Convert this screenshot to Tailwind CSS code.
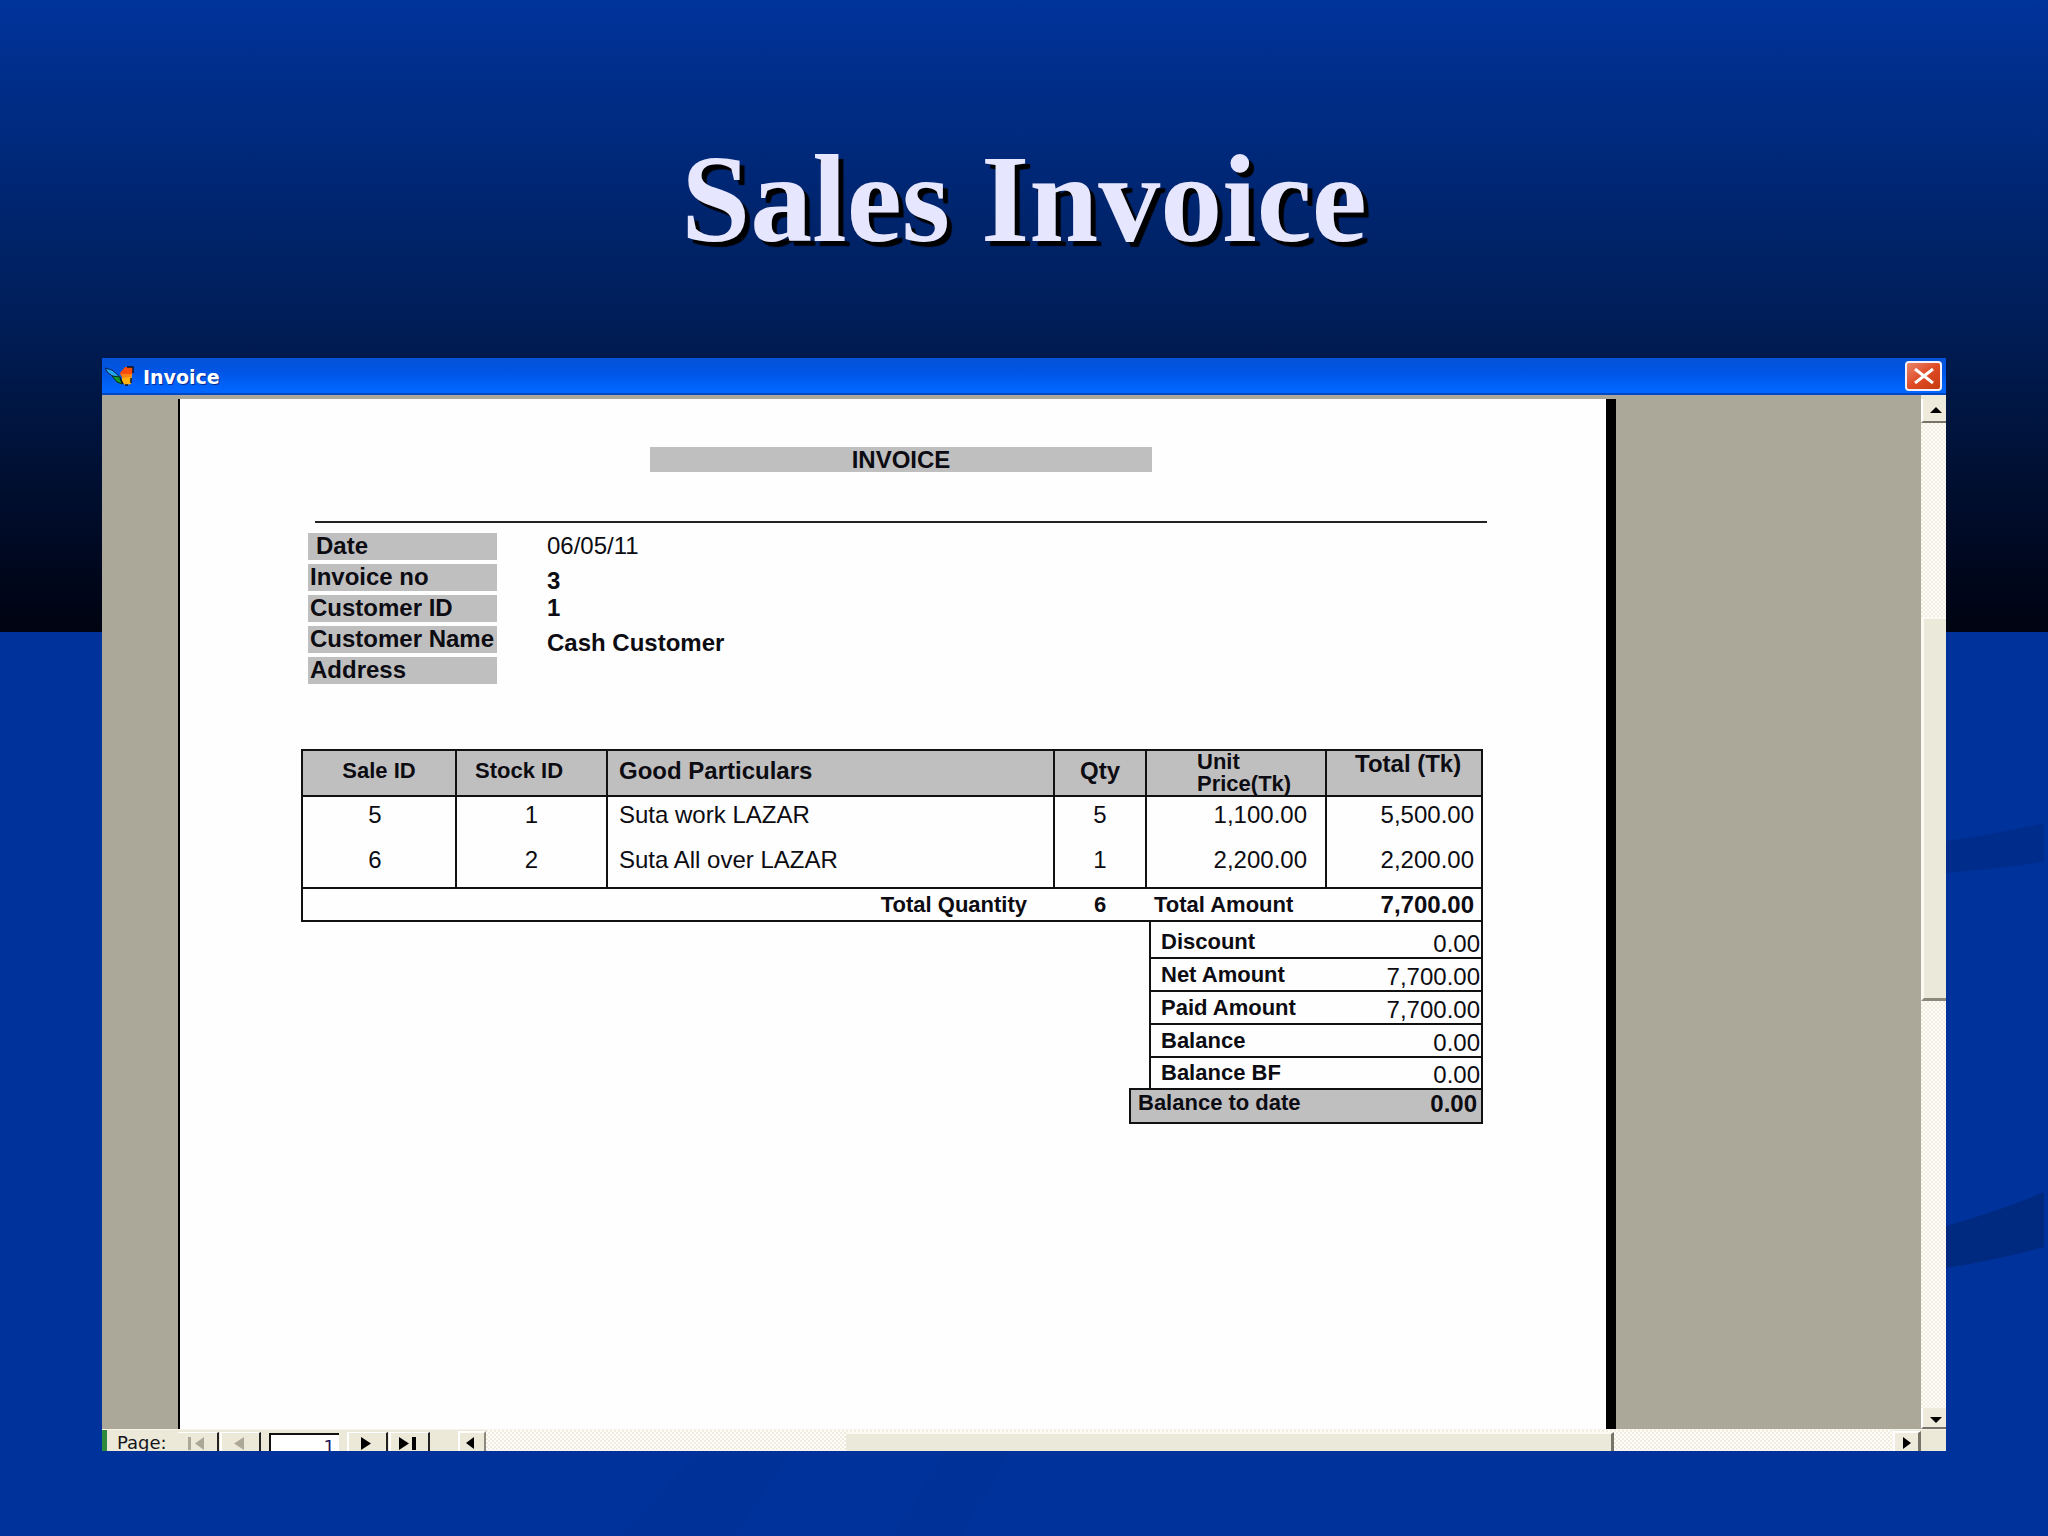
<!DOCTYPE html>
<html lang="en">
<head>
<meta charset="utf-8">
<title>Sales Invoice</title>
<meta name="viewport" content="width=device-width, initial-scale=1">
<script src="https://cdn.jsdelivr.net/npm/@tailwindcss/browser@4"></script>
</head>
<body class="bg-[#00329b]">
<div class="relative min-h-screen flex flex-col overflow-hidden">

  <!-- slide background -->
  <div class="absolute inset-x-0 top-0 h-[632px] bg-linear-to-b from-[#00339b] via-[#001e59] via-50% to-[#000411]"></div>
  <svg class="absolute right-0 top-0" width="1448" height="1536" viewBox="600 0 1448 1536" aria-hidden="true">
    <path d="M1946 841 Q1996 834 2044 823 V862 Q1996 869 1946 873 Z" fill="#002d8c"/>
    <path d="M1946 1226 Q2000 1211 2044 1192 V1247 Q1996 1260 1946 1268 Z" fill="#002a80"/>
    <path d="M622 1536 L700 1451 H790 L735 1536 Z" fill="#003198"/>
    <path d="M895 1536 L945 1451 H1010 L960 1536 Z" fill="#003198"/>
  </svg>

  <h1 class="relative pt-[138px] text-center font-['Liberation_Serif',serif] font-bold text-[124px] leading-none text-[#e6e6ff] [text-shadow:5px_5px_1px_#000]">Sales Invoice</h1>

  <!-- invoice window -->
  <section class="relative flex-1 flex flex-col mt-24 mx-[102px] mb-[85px] overflow-hidden bg-[#aca899]">
    <header class="flex items-center h-[37px] pl-[3px] pr-1 bg-linear-to-b from-[#0453d8] from-0% via-[#0055e5] via-40% to-[#0066ff] to-90% border-b-2 border-[#0148c4]">
      <svg class="w-[30px] h-5" viewBox="0 0 30 20" aria-hidden="true">
        <path d="M0 2 L7 4 L13 9 L15 13 L9 11 L3 7 Z" fill="#25a5ee" stroke="#06234f"/>
        <path d="M7 10 L15 11 L17 18 L12 16 Z" fill="#139a2b" stroke="#06330f"/>
        <path d="M15 7 L20 1 L28 1 L27 9 L16 10 Z" fill="#ff4c0a"/>
        <path d="M17 9 L27 8 L26 18 L20 19 L17 16 Z" fill="#ffb011"/>
        <path d="M16 8 L27 8 L26 11 L17 12 Z" fill="#ff8110"/>
        <path d="M22 1 H28 V7 M26 12 V17 M15 12 L18 18 M20 19 H23" fill="none" stroke="#10151c" stroke-width="1.5"/>
      </svg>
      <h2 class="ml-2 pt-0.5 font-['DejaVu_Sans',sans-serif] font-bold text-[19px] leading-6 text-white [text-shadow:1px_1px_0_#0a2a8c]">Invoice</h2>
      <button type="button" aria-label="Close" class="ml-auto flex items-center justify-center w-[37px] h-[30px] rounded-[4px] border-2 border-[#f4f1fb] bg-linear-to-br from-[#e88468] via-[#df4a24] to-[#c63b12]">
        <svg class="w-5 h-4" viewBox="0 0 20 16" aria-hidden="true"><path d="M1 1 L19 15 M19 1 L1 15" stroke="#fff" stroke-width="3"/></svg>
      </button>
    </header>

    <div class="flex-1 flex">
      <div class="w-[76px] shrink-0"></div>
      <main class="flex-1 mt-1 border-l-2 border-r-10 border-black bg-[#fefefe] pl-[121px] pr-[123px] pt-12 font-['Liberation_Sans',sans-serif] text-2xl leading-6 text-[#0c0c12]">
        <h3 class="ml-[349px] w-[502px] h-[25px] bg-[#c0bfc0] text-center font-bold leading-[26px]">INVOICE</h3>
        <hr class="ml-3.5 -mr-1 mt-[49px] border-t-2 border-[#222]">

        <dl class="ml-[7px] mt-[10px] grid grid-cols-[189px_1fr] auto-rows-[27px] gap-x-[50px] gap-y-1 leading-[26px]">
          <dt class="bg-[#c0bfc0] pl-2 font-bold">Date</dt>
          <dd>06/05/11</dd>
          <dt class="bg-[#c0bfc0] pl-0.5 font-bold">Invoice no</dt>
          <dd class="pt-1 font-bold">3</dd>
          <dt class="bg-[#c0bfc0] pl-0.5 font-bold">Customer ID</dt>
          <dd class="font-bold">1</dd>
          <dt class="bg-[#c0bfc0] pl-0.5 font-bold whitespace-nowrap">Customer Name</dt>
          <dd class="pt-1 font-bold">Cash Customer</dd>
          <dt class="bg-[#c0bfc0] pl-0.5 font-bold">Address</dt>
          <dd></dd>
        </dl>

        <table class="w-full mt-[65px] table-fixed border-collapse border-2 border-[#111]">
          <colgroup>
            <col class="w-[154px]">
            <col class="w-[151px]">
            <col>
            <col class="w-[92px]">
            <col class="w-[180px]">
            <col class="w-[156px]">
          </colgroup>
          <thead>
            <tr class="h-[46px] bg-[#c0bfc0] text-left">
              <th class="border-2 border-[#111] pb-1 text-center text-[22px]">Sale ID</th>
              <th class="border-2 border-[#111] pb-1 pl-[18px] text-[22px]">Stock ID</th>
              <th class="border-2 border-[#111] pb-1 pl-[11px]">Good Particulars</th>
              <th class="border-2 border-[#111] pb-1 text-center">Qty</th>
              <th class="border-2 border-[#111] pl-[50px] text-[22px] leading-[22px]">Unit<br>Price(Tk)</th>
              <th class="border-2 border-[#111] pl-7 align-top leading-[26px]">Total (Tk)</th>
            </tr>
          </thead>
          <tbody>
            <tr class="h-[46px] align-top leading-9">
              <td class="border-x-2 border-[#111] pr-2 text-center">5</td>
              <td class="border-x-2 border-[#111] text-center">1</td>
              <td class="border-x-2 border-[#111] pl-[11px]">Suta work LAZAR</td>
              <td class="border-x-2 border-[#111] text-center">5</td>
              <td class="border-x-2 border-[#111] pr-[18px] text-right">1,100.00</td>
              <td class="border-x-2 border-[#111] pr-[7px] text-right">5,500.00</td>
            </tr>
            <tr class="h-[46px] align-top leading-9">
              <td class="border-x-2 border-[#111] pr-2 text-center">6</td>
              <td class="border-x-2 border-[#111] text-center">2</td>
              <td class="border-x-2 border-[#111] pl-[11px]">Suta All over LAZAR</td>
              <td class="border-x-2 border-[#111] text-center">1</td>
              <td class="border-x-2 border-[#111] pr-[18px] text-right">2,200.00</td>
              <td class="border-x-2 border-[#111] pr-[7px] text-right">2,200.00</td>
            </tr>
          </tbody>
          <tfoot>
            <tr class="h-[33px] border-2 border-[#111] text-[22px] font-bold">
              <th colspan="3" class="pr-[27px] text-right">Total Quantity</th>
              <td class="text-center">6</td>
              <th class="pl-2 text-left">Total Amount</th>
              <td class="pr-[7px] text-right text-2xl leading-6">7,700.00</td>
            </tr>
          </tfoot>
        </table>

        <table class="w-[354px] ml-auto table-fixed border-collapse leading-[26px]">
          <colgroup>
            <col class="w-5">
            <col>
            <col class="w-[130px]">
          </colgroup>
          <tr class="h-9 align-bottom">
            <td></td>
            <th class="border-l-2 border-b-2 border-[#111] pl-[10px] pb-0.5 text-left text-[22px]">Discount</th>
            <td class="border-r-2 border-b-2 border-[#111] pr-px text-right">0.00</td>
          </tr>
          <tr class="h-[33px] align-bottom">
            <td></td>
            <th class="border-l-2 border-b-2 border-[#111] pl-[10px] pb-0.5 text-left text-[22px]">Net Amount</th>
            <td class="border-r-2 border-b-2 border-[#111] pr-px text-right">7,700.00</td>
          </tr>
          <tr class="h-[33px] align-bottom">
            <td></td>
            <th class="border-l-2 border-b-2 border-[#111] pl-[10px] pb-0.5 text-left text-[22px]">Paid Amount</th>
            <td class="border-r-2 border-b-2 border-[#111] pr-px text-right">7,700.00</td>
          </tr>
          <tr class="h-[33px] align-bottom">
            <td></td>
            <th class="border-l-2 border-b-2 border-[#111] pl-[10px] pb-0.5 text-left text-[22px]">Balance</th>
            <td class="border-r-2 border-b-2 border-[#111] pr-px text-right">0.00</td>
          </tr>
          <tr class="h-8 align-bottom">
            <td></td>
            <th class="border-l-2 border-b-2 border-[#111] pl-[10px] pb-0.5 text-left text-[22px]">Balance BF</th>
            <td class="border-r-2 border-b-2 border-[#111] pr-px text-right">0.00</td>
          </tr>
          <tr class="h-[34px] align-top bg-[#c0bfc0]">
            <th colspan="2" class="border-2 border-r-0 border-[#111] pl-[7px] text-left text-[22px]">Balance to date</th>
            <td class="border-2 border-l-0 border-[#111] pr-1 text-right font-bold leading-7">0.00</td>
          </tr>
        </table>
      </main>
      <div class="w-[305px] shrink-0"></div>

      <!-- vertical scroll bar -->
      <div class="w-[25px] shrink-0 flex flex-col border-t-4 border-[#ece9d8] bg-[repeating-conic-gradient(#fffefa_0_25%,#f0ece0_0_50%)] bg-[length:4px_4px]">
        <button type="button" aria-label="Scroll up" class="h-6 shrink-0 flex items-center justify-center pl-0.5 bg-[#eeebdd] border-l-2 border-l-white border-b-2 border-b-[#77756a]">
          <svg class="w-3 h-[6px]" viewBox="0 0 12 6"><path d="M6 0 L12 6 H0 Z"/></svg>
        </button>
        <div class="grow-[195]"></div>
        <div class="grow-[382] bg-[#ebe9da] border-l-3 border-l-[#fbfaf2] border-t-2 border-t-[#fbfaf2] border-b-3 border-b-[#8b897b]"></div>
        <div class="grow-[410]"></div>
        <button type="button" aria-label="Scroll down" class="h-[21px] shrink-0 flex items-center justify-center pl-0.5 pt-1 bg-[#eeebdd] border-l-2 border-l-white border-b-2 border-b-[#77756a]">
          <svg class="w-3 h-[6px]" viewBox="0 0 12 6"><path d="M0 0 H12 L6 6 Z"/></svg>
        </button>
      </div>
    </div>

    <!-- page navigation and horizontal scroll bar, cut off by the window edge -->
    <footer class="h-[22px] flex overflow-hidden bg-[#ece9d8] border-t border-[#f6f4ea]">
      <div class="w-[5px] bg-[#2c8a3c]"></div>
      <label for="page" class="w-[71px] pl-[10px] pt-px font-['DejaVu_Sans',sans-serif] text-lg leading-6 text-[#15151c]">Page:</label>
      <button type="button" aria-label="First page" class="w-[41px] mt-0.5 pr-1 flex justify-center pt-1 border-t border-t-white border-r-2 border-r-[#222]">
        <svg class="w-4 h-[13px]" viewBox="0 0 16 13" fill="#aca899"><path d="M0 0 H3 V13 H0 Z M16 0 V13 L7 6.5 Z"/></svg>
      </button>
      <button type="button" aria-label="Previous page" class="w-[41px] ml-px mt-0.5 pr-1 flex justify-center pt-1 border-t border-t-white border-l-2 border-l-white border-r-2 border-r-[#222]">
        <svg class="w-[10px] h-[13px]" viewBox="0 0 10 13" fill="#aca899"><path d="M10 0 V13 L0 6.5 Z"/></svg>
      </button>
      <input id="page" type="text" value="1" class="w-[70px] h-6 ml-2 mt-[3px] pr-1 bg-white border-t-2 border-l-2 border-[#111] text-right font-['DejaVu_Sans',sans-serif] text-lg leading-5 text-[#16165a]">
      <button type="button" aria-label="Next page" class="w-[41px] ml-2 mt-0.5 pr-1 flex justify-center pt-1 border-t border-t-white border-l-2 border-l-white border-r-2 border-r-[#222]">
        <svg class="w-[10px] h-[13px]" viewBox="0 0 10 13"><path d="M0 0 V13 L10 6.5 Z"/></svg>
      </button>
      <button type="button" aria-label="Last page" class="w-[41px] ml-px mt-0.5 pr-1 flex justify-center pt-1 border-t border-t-white border-l-2 border-l-white border-r-2 border-r-[#222]">
        <svg class="w-[17px] h-[13px]" viewBox="0 0 17 13"><path d="M0 0 V13 L10 6.5 Z M13 0 H17 V13 H13 Z"/></svg>
      </button>
      <button type="button" aria-label="Scroll left" class="w-7 ml-7 pr-1 flex justify-center pt-1 mt-px border-t-2 border-t-white border-l-2 border-l-white border-r-2 border-r-[#8b897b]">
        <svg class="w-2 h-3" viewBox="0 0 8 12"><path d="M8 0 V12 L0 6 Z"/></svg>
      </button>
      <div class="flex-1 flex bg-[repeating-conic-gradient(#fffefa_0_25%,#f0ece0_0_50%)] bg-[length:4px_4px]">
        <div class="grow-[360]"></div>
        <div class="grow-[766] mt-0.5 bg-[#ebe9da] border-t-2 border-t-[#fbfaf2] border-r-3 border-r-[#77756a]"></div>
        <div class="grow-[279]"></div>
      </div>
      <button type="button" aria-label="Scroll right" class="w-7 mt-px flex justify-center pt-1 bg-[#eeebdd] border-t-2 border-t-white border-l-2 border-l-white border-r-3 border-r-[#77756a]">
        <svg class="w-2 h-3" viewBox="0 0 8 12"><path d="M0 0 V12 L8 6 Z"/></svg>
      </button>
      <div class="w-[25px]"></div>
    </footer>
  </section>
</div>
</body>
</html>
